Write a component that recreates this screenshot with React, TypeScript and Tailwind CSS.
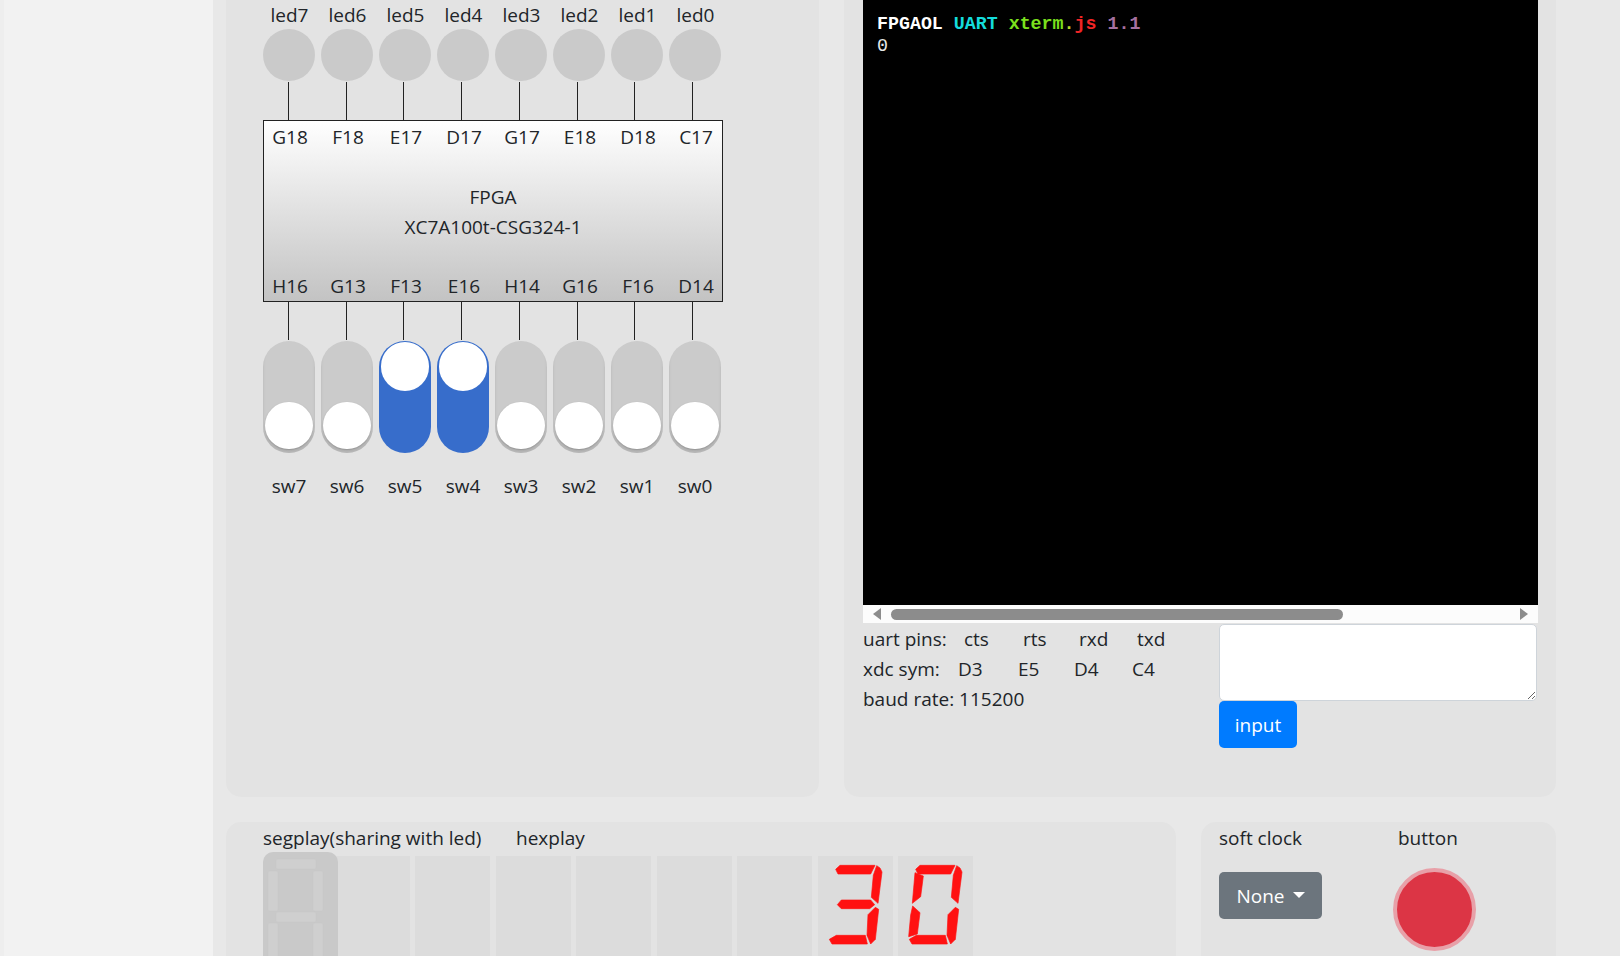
import React from "react";

const leds = ["led7", "led6", "led5", "led4", "led3", "led2", "led1", "led0"];
const topPins = ["G18", "F18", "E17", "D17", "G17", "E18", "D18", "C17"];
const bottomPins = ["H16", "G13", "F13", "E16", "H14", "G16", "F16", "D14"];
const lineOffsets = ["ml-[25px]", "ml-[25px]", "ml-[24px]", "ml-[24px]", "ml-[24px]", "ml-[24px]", "ml-[23px]", "ml-[23px]"];
const switches = [
  { name: "sw7", on: false },
  { name: "sw6", on: false },
  { name: "sw5", on: true },
  { name: "sw4", on: true },
  { name: "sw3", on: false },
  { name: "sw2", on: false },
  { name: "sw1", on: false },
  { name: "sw0", on: false },
];

const Wires: React.FC = () => (
  <div className="flex h-[38px]">
    {lineOffsets.map((offset, i) => (
      <div key={i} className="w-[58px]">
        <div className={`h-full w-px bg-[#222] ${offset}`} />
      </div>
    ))}
  </div>
);

const PinRow: React.FC<{ pins: string[] }> = ({ pins }) => (
  <div className="-ml-[3px] flex">
    {pins.map((pin) => (
      <div key={pin} className="w-[58px] shrink-0 text-center">
        {pin}
      </div>
    ))}
  </div>
);

const Switch: React.FC<{ on: boolean }> = ({ on }) => (
  <div
    className={`relative h-[112px] w-[52px] rounded-[26px] ${
      on ? "bg-[#376dcb]" : "bg-[#cbcbcb] shadow-[inset_0_-4px_3px_rgba(0,0,0,0.1)]"
    }`}
  >
    {on ? (
      <div className="absolute left-[2px] top-[1px] h-[49px] w-[48px] rounded-full bg-white" />
    ) : (
      <div className="absolute bottom-[4px] left-[2px] h-[47px] w-[48px] rounded-full bg-white shadow-[0_1px_2px_rgba(0,0,0,0.25)]" />
    )}
  </div>
);

const SEGMENTS = {
  a: "53,40 66,28 171,28 158,54 60,54",
  b: "176,29 186,36 192,48 180,142 160,124 166,58",
  c: "172,154 182,160 172,250 158,264 147,238 150,176",
  d: "34,250 55,238 142,238 148,264 42,264",
  e: "44,150 66,170 58,234 32,242 38,177",
  f: "51,50 76,60 68,122 43,142",
  g: "58,146 70,132 158,132 170,146 155,158 70,158",
};

const HexDigit: React.FC<{ on?: (keyof typeof SEGMENTS)[] }> = ({ on = [] }) => (
  <div className="mt-[4px] h-[110px] w-[75px] bg-[#dcdcdc]">
    <svg viewBox="0 0 225 330" className="h-[110px] w-[75px]">
      {on.map((s) => (
        <polygon key={s} points={SEGMENTS[s]} fill="#ff1111" stroke="#ff1111" strokeWidth="2" strokeLinejoin="round" />
      ))}
    </svg>
  </div>
);

const SegDisplay: React.FC = () => (
  <div className="relative z-10 -mr-[9px] h-[120px] w-[75px] rounded-[10px] bg-[#c9c9c9]">
    <svg viewBox="0 0 75 120" className="h-[120px] w-[75px]">
      <g fill="#cfcfcf" stroke="#c6c6c6" strokeWidth="0.5">
        <rect x="13" y="7" width="40" height="10" rx="1.5" />
        <rect x="5" y="19" width="10" height="40" rx="1.5" />
        <rect x="50" y="19" width="10" height="40" rx="1.5" />
        <rect x="13" y="60" width="40" height="10" rx="1.5" />
        <rect x="5" y="71" width="10" height="40" rx="1.5" />
        <rect x="50" y="71" width="10" height="40" rx="1.5" />
      </g>
    </svg>
  </div>
);

export default function App() {
  return (
    <div className="flex h-[956px] w-full overflow-hidden bg-[#e8e8e8] font-['Open_Sans',sans-serif] text-[19px] leading-[30px] text-[#212529]">
      {/* sidebar */}
      <div className="w-[213px] shrink-0 border-l-4 border-[#eeeeee] bg-[#f2f2f2]" />

      <div className="w-[1345px] shrink-0 pl-[13px]">
        {/* fpga + uart */}
        <div className="-mt-[20px] flex gap-[25px]">
          <div className="h-[817px] w-[593px] rounded-[15px] bg-[#e3e3e3] pl-[37px] pt-[20px]">
            <div className="flex">
              {leds.map((led) => (
                <div key={led} className="w-[58px] pr-[5px] text-center">
                  {led}
                </div>
              ))}
            </div>
            <div className="-mt-px flex">
              {leds.map((led) => (
                <div key={led} className="w-[58px]">
                  <div className="h-[52px] w-[52px] rounded-full bg-[#cacaca]" />
                </div>
              ))}
            </div>
            <div className="h-px" />
            <Wires />
            <div className="flex h-[182px] w-[460px] flex-col justify-between border border-[#222] bg-gradient-to-b from-white to-[#c3c3c3] pt-px">
              <PinRow pins={topPins} />
              <div className="text-center">
                <div>FPGA</div>
                <div>XC7A100t-CSG324-1</div>
              </div>
              <PinRow pins={bottomPins} />
            </div>
            <Wires />
            <div className="mt-px flex">
              {switches.map((sw) => (
                <div key={sw.name} className="w-[58px]">
                  <Switch on={sw.on} />
                </div>
              ))}
            </div>
            <div className="mt-[18px] flex">
              {switches.map((sw) => (
                <div key={sw.name} className="w-[58px] pr-[6px] text-center">
                  {sw.name}
                </div>
              ))}
            </div>
          </div>

          <div className="h-[817px] w-[712px] rounded-[15px] bg-[#e3e3e3] pl-[19px]">
            <div className="h-[625px] w-[675px] bg-black pl-[14px] pt-[33px] font-['Liberation_Mono',monospace] text-[18.3px] leading-[22px] text-white">
              <div className="font-bold whitespace-pre">
                FPGAOL <span className="text-[#14dcdc]">UART</span> <span className="text-[#7be01d]">xterm</span>
                <span className="text-[#b5d92a]">.</span>
                <span className="text-[#f02525]">js</span> <span className="text-[#a5709f]">1.1</span>
              </div>
              <div className="text-[#e8e8e8]">0</div>
            </div>
            <div className="flex h-[18px] w-[675px] items-center bg-[#fcfcfc]">
              <svg viewBox="0 0 10 12" className="ml-[9px] h-[12px] w-[10px]">
                <polygon points="9,0 9,12 1,6" fill="#8c8c8c" />
              </svg>
              <div className="ml-[9px] h-[11px] w-[452px] rounded-full bg-[#8c8c8c]" />
              <svg viewBox="0 0 10 12" className="ml-[176px] h-[12px] w-[10px]">
                <polygon points="1,0 1,12 9,6" fill="#8c8c8c" />
              </svg>
            </div>
            <div className="mt-px flex">
              <div className="w-[356px]">
                <div className="flex">
                  <div className="w-[101px]">uart pins:</div>
                  <div className="w-[59px]">cts</div>
                  <div className="w-[56px]">rts</div>
                  <div className="w-[58px]">rxd</div>
                  <div>txd</div>
                </div>
                <div className="flex">
                  <div className="w-[95px]">xdc sym:</div>
                  <div className="w-[60px]">D3</div>
                  <div className="w-[56px]">E5</div>
                  <div className="w-[58px]">D4</div>
                  <div>C4</div>
                </div>
                <div>baud rate: 115200</div>
              </div>
              <div>
                <textarea className="block h-[77px] w-[318px] rounded-[5px] border border-[#ced4da] bg-white" />
                <button className="h-[47px] w-[78px] rounded-[5px] bg-[#007bff] text-white">input</button>
              </div>
            </div>
          </div>
        </div>

        {/* displays + controls */}
        <div className="mt-[25px] flex gap-[25px]">
          <div className="h-[200px] w-[950px] rounded-[15px] bg-[#e3e3e3] pl-[37px] pt-px">
            <div className="flex">
              <div className="w-[253px]">segplay(sharing with led)</div>
              <div>hexplay</div>
            </div>
            <div className="-mt-px flex gap-[5.5px]">
              <SegDisplay />
              <HexDigit />
              <HexDigit />
              <HexDigit />
              <HexDigit />
              <HexDigit />
              <HexDigit />
              <HexDigit on={["a", "b", "c", "d", "g"]} />
              <HexDigit on={["a", "b", "c", "d", "e", "f"]} />
            </div>
          </div>

          <div className="h-[200px] w-[355px] rounded-[15px] bg-[#e3e3e3] pl-[18px] pt-px">
            <div className="flex">
              <div className="w-[179px]">soft clock</div>
              <div>button</div>
            </div>
            <div className="flex">
              <button className="mt-[19px] flex h-[47px] w-[103px] items-center justify-center gap-[8px] rounded-[5px] bg-[#6c757d] text-white">
                None
                <span className="mt-[-2px] h-0 w-0 border-x-[6px] border-t-[6px] border-x-transparent border-t-white" />
              </button>
              <div className="ml-[71px] mt-[15px] h-[83px] w-[83px] rounded-full border-4 border-[#e8a0a8] bg-[#dc3545]" />
            </div>
          </div>
        </div>
      </div>
    </div>
  );
}
